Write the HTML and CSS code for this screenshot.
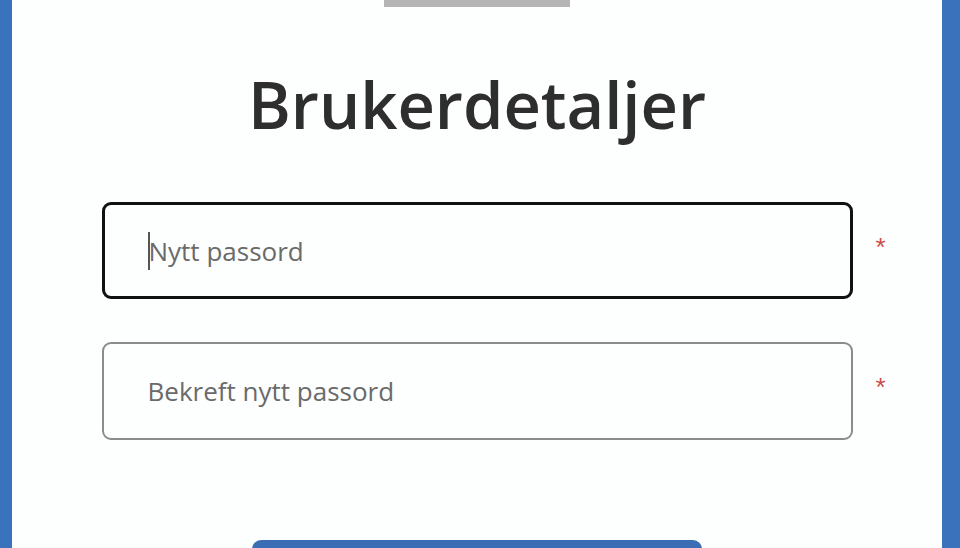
FILE: index.html
```html
<!DOCTYPE html>
<html lang="no">
<head>
<meta charset="utf-8">
<title>Brukerdetaljer</title>
<link rel="stylesheet" href="styles.css">
</head>
<body>
<div class="frame">
  <div class="side side-left"></div>
  <main class="panel">
    <div class="logo-bar"></div>
    <h1 class="title">Brukerdetaljer</h1>
    <form class="form">
      <div class="field">
        <div class="box box-focus"><span class="caret"></span><span class="ph">Nytt passord</span></div>
        <span class="req">*</span>
      </div>
      <div class="field">
        <div class="box"><span class="ph">Bekreft nytt passord</span></div>
        <span class="req">*</span>
      </div>
    </form>
    <div class="button"></div>
  </main>
  <div class="side side-right"></div>
</div>
</body>
</html>
```
FILE: styles.css
```css
html, body {
  margin: 0;
  padding: 0;
  height: 100%;
  overflow: hidden;
  background: #ffffff;
}
.frame {
  display: flex;
  height: 548px;
  width: 960px;
}
.side {
  background: #3a73bb;
  flex: none;
}
.side-left { width: 12px; }
.side-right { width: 18px; }
.panel {
  flex: 1;
  background: #fdfefe;
  display: flex;
  flex-direction: column;
  align-items: center;
}
.panel > * {
  flex: none;
}
.logo-bar {
  width: 186px;
  height: 7px;
  background: #b5b5b5;
}
.title {
  margin: 49px 0 0 0;
  font-family: "Open Sans", "Noto Sans", sans-serif;
  font-weight: 600;
  font-size: 65px;
  line-height: 96px;
  color: #2e2e2e;
  letter-spacing: 0;
}
.form {
  margin-top: 50px;
  width: 751px;
  display: flex;
  flex-direction: column;
  gap: 43px;
}
.field {
  position: relative;
}
.box {
  box-sizing: border-box;
  height: 98px;
  border: 2px solid #8c8c8c;
  border-radius: 9px;
  display: flex;
  align-items: center;
  padding-left: 44px;
  font-family: "Open Sans", "Noto Sans", sans-serif;
  font-size: 26px;
  color: #6a6a6a;
}
.box-focus {
  height: 97px;
  border: 3px solid #111111;
  padding-left: 43px;
}
.caret {
  display: inline-block;
  width: 2px;
  height: 38px;
  background: #555;
  margin-right: -1px;
}
.req {
  position: absolute;
  left: calc(100% + 23px);
  top: 30px;
  font-family: "Liberation Sans", sans-serif;
  font-size: 26px;
  color: #c9504a;
}
.button {
  margin-top: 100px;
  width: 450px;
  height: 30px;
  background: #3b6db4;
  border-radius: 9px 9px 0 0;
}
```
